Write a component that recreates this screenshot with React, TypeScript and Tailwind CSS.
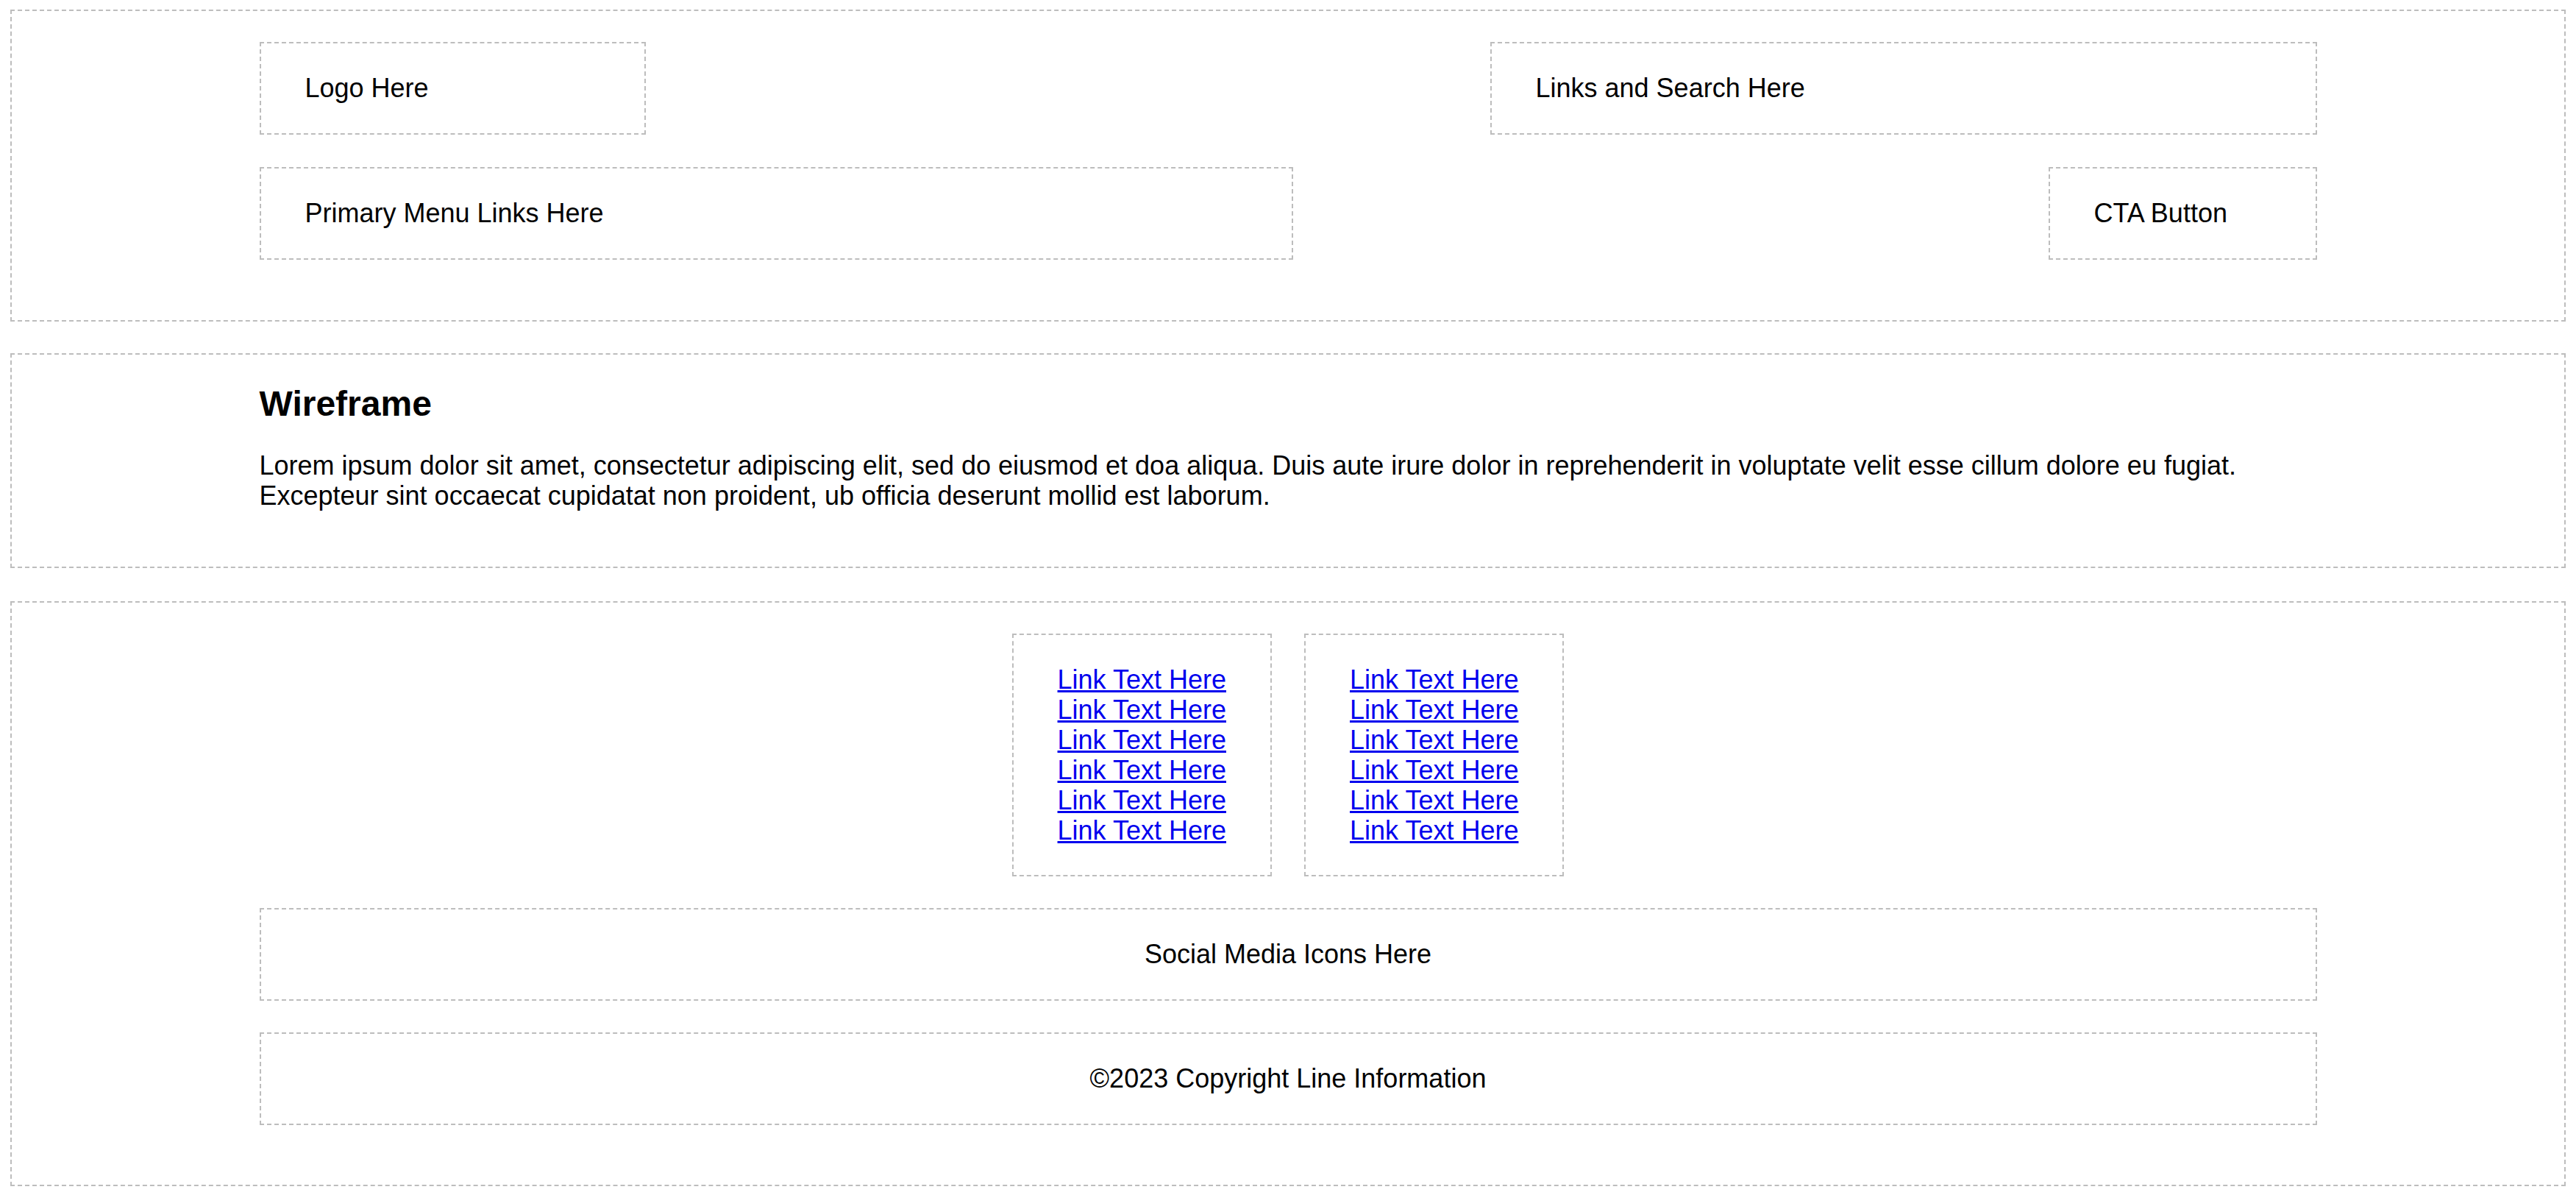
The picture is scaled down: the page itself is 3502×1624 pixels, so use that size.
export default function App() {
  const box = "border-2 border-dashed border-[#bdbdbd]";
  const links = Array.from({ length: 6 }, (_, i) => i);

  return (
    <div
      className="min-h-screen bg-white px-[14px] pt-[13px] pb-[12px] text-black text-[36px] leading-[42px]"
      style={{ fontFamily: '"Liberation Sans", Arial, Helvetica, sans-serif' }}
    >
      {/* Header */}
      <header className={`${box} pt-[42px] pb-[82px]`}>
        <div className="w-[2797px] mx-auto flex flex-col gap-[44px]">
          <div className="flex justify-between">
            <div className={`${box} w-[525px] px-[60px] py-[40px]`}>Logo Here</div>
            <div className={`${box} w-[1124px] px-[60px] py-[40px]`}>
              Links and Search Here
            </div>
          </div>
          <div className="flex justify-between">
            <div className={`${box} w-[1405px] px-[60px] py-[40px]`}>
              Primary Menu Links Here
            </div>
            <div className={`${box} w-[365px] px-[60px] py-[40px]`}>CTA Button</div>
          </div>
        </div>
      </header>

      {/* Content */}
      <section className={`${box} mt-[43px] pt-[39px] pb-[76px]`}>
        <div className="w-[2797px] mx-auto">
          <h2 className="text-[48px] leading-[55px] font-bold">Wireframe</h2>
          <p className="mt-[36px] leading-[41px]">
            Lorem ipsum dolor sit amet, consectetur adipiscing elit, sed do eiusmod et doa
            aliqua. Duis aute irure dolor in reprehenderit in voluptate velit esse cillum dolore
            eu fugiat. Excepteur sint occaecat cupidatat non proident, ub officia deserunt mollid
            est laborum.
          </p>
        </div>
      </section>

      {/* Footer */}
      <footer className={`${box} mt-[45px] pt-[42px] pb-[81px]`}>
        <div className="w-[2797px] mx-auto flex flex-col gap-[43px]">
          <div className="flex justify-center gap-[44px]">
            {[0, 1].map((col) => (
              <ul key={col} className={`${box} px-[60px] py-[40px] leading-[41px]`}>
                {links.map((i) => (
                  <li key={i}>
                    <a href="#" className="text-[#0000ee] underline whitespace-nowrap">
                      Link Text Here
                    </a>
                  </li>
                ))}
              </ul>
            ))}
          </div>
          <div className={`${box} px-[60px] py-[40px] text-center`}>Social Media Icons Here</div>
          <div className={`${box} px-[60px] py-[40px] text-center`}>
            ©2023 Copyright Line Information
          </div>
        </div>
      </footer>
    </div>
  );
}
